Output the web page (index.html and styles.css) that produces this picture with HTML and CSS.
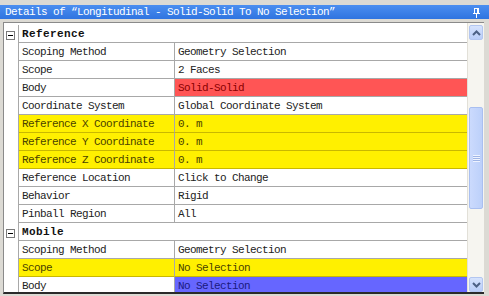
FILE: index.html
```html
<!DOCTYPE html>
<html lang="en">
<head>
  <meta charset="UTF-8" />
  <title>Details</title>
  <link rel="stylesheet" href="styles.css">
</head>
<body>
  <div class="panel">
    <div class="titlebar">
      <span class="title">Details of “Longitudinal - Solid-Solid To No Selection”</span>
      <svg class="pin" width="7" height="10" viewBox="0 0 7 10">
        <rect x="1.5" y="0.5" width="4" height="5" fill="none" stroke="#fff" />
        <rect x="4" y="1" width="1" height="4" fill="#fff" />
        <rect x="0" y="5" width="7" height="1" fill="#fff" />
        <rect x="3" y="6" width="1" height="4" fill="#fff" />
      </svg>
    </div>

    <div class="details">
      <div class="grid">
        <div class="row cat">
          <span class="gutter"><span class="box"></span></span>
          <span class="cat-name">Reference</span>
        </div>
        <div class="row"><span class="gutter"></span><span class="name">Scoping Method</span><span class="value">Geometry Selection</span></div>
        <div class="row"><span class="gutter"></span><span class="name">Scope</span><span class="value">2 Faces</span></div>
        <div class="row"><span class="gutter"></span><span class="name">Body</span><span class="value red">Solid-Solid</span></div>
        <div class="row"><span class="gutter"></span><span class="name">Coordinate System</span><span class="value">Global Coordinate System</span></div>
        <div class="row yellow"><span class="gutter"></span><span class="name">Reference X Coordinate</span><span class="value">0. m</span></div>
        <div class="row yellow"><span class="gutter"></span><span class="name">Reference Y Coordinate</span><span class="value">0. m</span></div>
        <div class="row yellow"><span class="gutter"></span><span class="name">Reference Z Coordinate</span><span class="value">0. m</span></div>
        <div class="row"><span class="gutter"></span><span class="name">Reference Location</span><span class="value">Click to Change</span></div>
        <div class="row"><span class="gutter"></span><span class="name">Behavior</span><span class="value">Rigid</span></div>
        <div class="row"><span class="gutter"></span><span class="name">Pinball Region</span><span class="value">All</span></div>
        <div class="row cat">
          <span class="gutter"><span class="box"></span></span>
          <span class="cat-name">Mobile</span>
        </div>
        <div class="row"><span class="gutter"></span><span class="name">Scoping Method</span><span class="value">Geometry Selection</span></div>
        <div class="row yellow"><span class="gutter"></span><span class="name">Scope</span><span class="value">No Selection</span></div>
        <div class="row"><span class="gutter"></span><span class="name">Body</span><span class="value blue">No Selection</span></div>
      </div>

      <div class="scrollbar">
        <div class="sb-btn">
          <svg width="9" height="6" viewBox="0 0 9 6"><path d="M1 5 L4.5 1.5 L8 5" fill="none" stroke="#4d6185" stroke-width="2" /></svg>
        </div>
        <div class="sb-track">
          <div class="sb-thumb"><span class="grip"></span></div>
        </div>
        <div class="sb-btn">
          <svg width="9" height="6" viewBox="0 0 9 6"><path d="M1 1 L4.5 4.5 L8 1" fill="none" stroke="#4d6185" stroke-width="2" /></svg>
        </div>
      </div>
    </div>
  </div>
</body>
</html>
```

FILE: styles.css
```css
body { margin: 0; background: #dcdad4; font-family: "Liberation Mono", "DejaVu Sans Mono", monospace; }
.panel { width: 489px; height: 296px; display: flex; flex-direction: column; padding-top: 5px; box-sizing: border-box; overflow: hidden; background: #dcdad4; }
.titlebar { height: 14px; flex: none; display: flex; align-items: center; justify-content: space-between; padding: 0 9px 0 5px; background: linear-gradient(#4b8ef0, #2f74e0); color: #fff; font-size: 11px; letter-spacing: -0.6px; }
.title { white-space: nowrap; }
.pin { display: block; margin-top: 1px; }

.details { flex: 1; display: flex; min-height: 0; margin: 3px 5px 2px 3px; border-top: 1px solid #8a8a8a; border-left: 1px solid #8a8a8a; border-bottom: 2px solid #2a2a2a; background: #fff; }
.grid { flex: 1; padding-top: 2px; overflow: hidden; font-size: 11px; letter-spacing: -0.6px; color: #222; }

.row { display: grid; grid-template-columns: 15px 156px 1fr; height: 18px; }
.gutter { border-right: 1px solid #a8a8a8; display: flex; align-items: center; justify-content: center; padding-right: 1px; }
.name, .value, .cat-name { display: flex; align-items: center; padding-left: 3px; border-bottom: 1px solid #a8a8a8; white-space: nowrap; overflow: hidden; }
.name { border-right: 1px solid #a8a8a8; }
.cat-name { grid-column: 2 / 4; font-weight: bold; letter-spacing: 0.4px; color: #111; padding-top: 1px; }

.box { width: 7px; height: 7px; border: 1px solid #7a7a7a; background: #fff; position: relative; margin-top: 2px; }
.box::after { content: ""; position: absolute; left: 1px; top: 3px; width: 5px; height: 1px; background: #000; }

.yellow .name, .yellow .value { background: #fff000; color: #4a4200; border-bottom-color: #c9b800; }
.value.red { background: #ff5555; color: #8a0000; }
.value.blue { background: #6666ff; color: #1a1a80; }

.scrollbar { width: 17px; flex: none; display: flex; flex-direction: column; background: #f6f5f0; border-left: 1px solid #e2e0d8; box-sizing: border-box; padding: 2px 1px 0 1px; }
.sb-btn { height: 15px; flex: none; display: flex; align-items: center; justify-content: center; background: linear-gradient(#d6e3fd, #b9cdf8); border: 1px solid #b3c6f0; border-radius: 2px; box-sizing: border-box; }
.sb-track { flex: 1; padding: 0 0; }
.sb-thumb { margin-top: 67px; height: 102px; background: linear-gradient(90deg, #cbdafd, #bcd0fa); border: 1px solid #a9bff0; border-radius: 2px; box-sizing: border-box; display: flex; align-items: center; justify-content: center; }
.grip { width: 7px; height: 7px; background: repeating-linear-gradient(#eef3ff 0 1px, #9fb5e6 1px 2px); }
```
